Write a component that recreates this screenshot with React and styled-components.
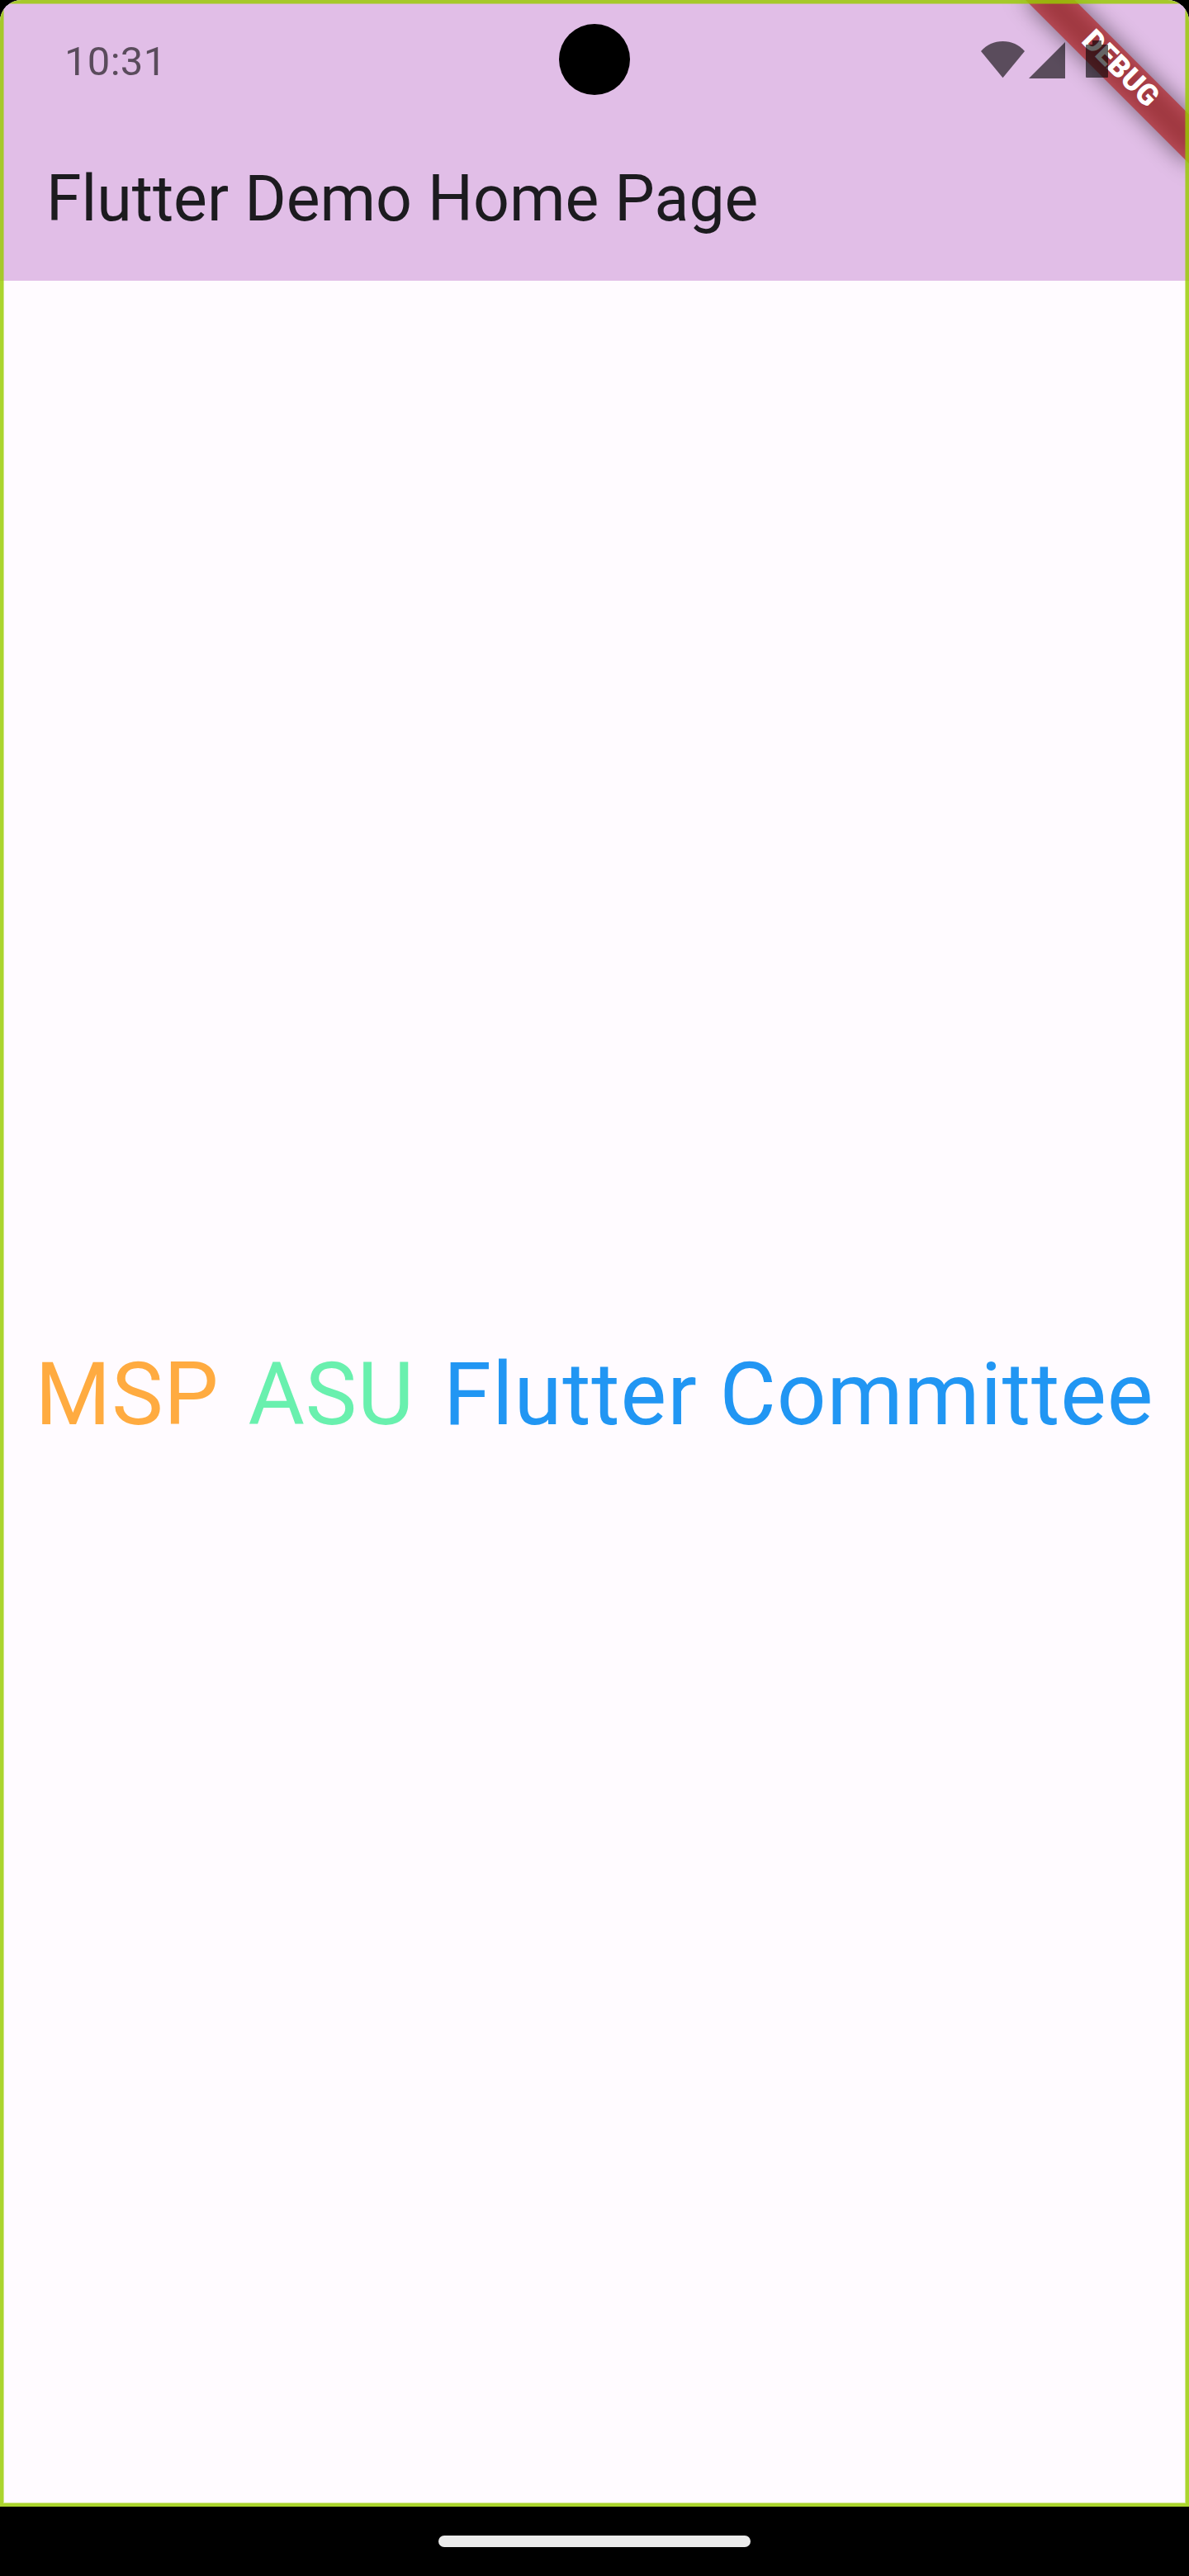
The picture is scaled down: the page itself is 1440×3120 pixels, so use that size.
import React from "react";
import styled, { createGlobalStyle } from "styled-components";

const GlobalStyle = createGlobalStyle`
  *, *::before, *::after { box-sizing: border-box; }
  html, body { margin: 0; padding: 0; background: #000; }
  body { font-family: Roboto, sans-serif; }
`;

const Device = styled.div`
  display: flex;
  flex-direction: column;
  width: 1440px;
  height: 3120px;
  background: #000;
  overflow: hidden;
`;

const Screen = styled.div`
  position: relative;
  display: flex;
  flex-direction: column;
  height: 3036px;
  background: #fffbff;
  border-radius: 26px 26px 0 0;
  overflow: hidden;
`;

const Header = styled.header`
  display: flex;
  flex-direction: column;
  height: 340px;
  background: #e1bee7;
`;

const StatusBar = styled.div`
  position: relative;
  z-index: 2;
  display: grid;
  grid-template-columns: 1fr 86px 1fr;
  align-items: center;
  height: 144px;
  padding: 0 98px;
`;

const Clock = styled.time`
  font-size: 49px;
  line-height: 58px;
  letter-spacing: 0.3px;
  margin-left: -20px;
  padding-top: 5px;
  color: rgba(0, 0, 0, 0.6);
`;

const Camera = styled.div`
  width: 86px;
  height: 86px;
  border-radius: 50%;
  background: #000;
`;

const StatusIcons = styled.div`
  display: flex;
  justify-content: flex-end;
  align-items: flex-end;
  height: 46px;
  svg { display: block; fill: rgba(0, 0, 0, 0.6); }
`;

const AppBar = styled.div`
  display: flex;
  align-items: center;
  height: 196px;
  padding: 0 56px 2px;
`;

const Title = styled.h1`
  margin: 0;
  font-size: 77px;
  font-weight: 400;
  line-height: 98px;
  color: #1c1b1f;
`;

const Body = styled.main`
  flex: 1;
  display: flex;
  align-items: center;
  justify-content: center;
  gap: 35px;
  padding-top: 3px;
`;

const Word = styled.span`
  font-size: 105px;
  line-height: 150px;
  letter-spacing: 0.875px;
  white-space: nowrap;
  color: ${({ $color }) => $color};
`;

const BannerPivot = styled.div`
  position: absolute;
  z-index: 1;
  top: 0;
  left: 1440px;
  width: 0;
  height: 0;
  transform: rotate(45deg);
`;

const BannerShadow = styled.div`
  position: absolute;
  left: -140px;
  top: 98px;
  width: 280px;
  height: 42px;
  background: rgba(0, 0, 0, 0.5);
  filter: blur(13.9px);
`;

const Banner = styled.div`
  position: absolute;
  left: -140px;
  top: 98px;
  width: 280px;
  height: 42px;
  background: rgba(183, 28, 28, 0.627);
  color: #fff;
  font-size: 35.7px;
  font-weight: 900;
  line-height: 39.4px;
  text-align: center;
`;

const FocusFrame = styled.div`
  position: absolute;
  z-index: 3;
  inset: 0;
  border: 4px solid rgba(153, 204, 0, 0.82);
  pointer-events: none;
  &::after {
    content: "";
    position: absolute;
    inset: 0;
    border: 1px solid rgba(153, 204, 0, 0.45);
  }
`;

const NavBar = styled.nav`
  display: flex;
  justify-content: center;
  align-items: center;
  height: 84px;
`;

const NavHandle = styled.div`
  width: 378px;
  height: 14px;
  border-radius: 7px;
  background: #ebebeb;
`;

const words = [
  { text: "MSP", color: "#ffab40" },
  { text: "ASU", color: "#69f0ae" },
  { text: "Flutter Committee", color: "#2196f3" },
];

function SystemIcons() {
  return (
    <StatusIcons>
      <svg width="154" height="46" viewBox="0 0 154 46">
        <path d="M0 13C7 5 16 1 26.500 1S46 5 53 13L26.500 45.300Z" />
        <path d="M102 2V46H58Z" />
        <path d="M135 0H146V5H153Q154 5 154 6V44Q154 45 153 45H128Q127 45 127 44V6Q127 5 128 5H135Z" />
      </svg>
    </StatusIcons>
  );
}

export default function App() {
  return (
    <Device>
      <GlobalStyle />
      <Screen>
        <Header>
          <StatusBar>
            <Clock>10:31</Clock>
            <Camera />
            <SystemIcons />
          </StatusBar>
          <AppBar>
            <Title>Flutter Demo Home Page</Title>
          </AppBar>
        </Header>
        <Body>
          {words.map((w) => (
            <Word key={w.text} $color={w.color}>{w.text}</Word>
          ))}
        </Body>
        <BannerPivot>
          <BannerShadow />
          <Banner>DEBUG</Banner>
        </BannerPivot>
        <FocusFrame />
      </Screen>
      <NavBar>
        <NavHandle />
      </NavBar>
    </Device>
  );
}
